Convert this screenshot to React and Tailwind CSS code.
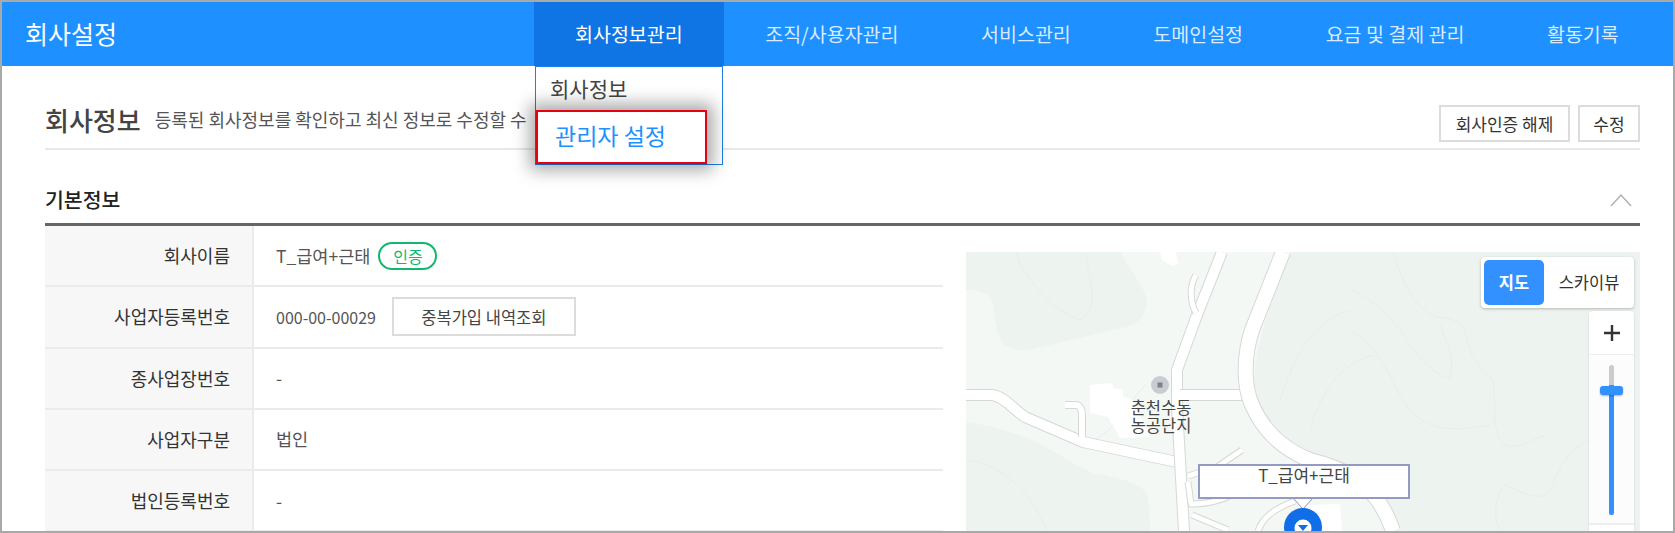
const navItems = ["회사정보관리", "조직/사용자관리", "서비스관리", "도메인설정", "요금 및 결제 관리", "활동기록"];

const rows = [
  { label: "회사이름", value: "T_급여+근태", badge: true },
  { label: "사업자등록번호", value: "000-00-00029", button: "중복가입 내역조회", small: true },
  { label: "종사업장번호", value: "-" },
  { label: "사업자구분", value: "법인" },
  { label: "법인등록번호", value: "-" },
];

function Road({ d, w }) {
  return (
    <g fill="none" strokeLinecap="butt" strokeLinejoin="round">
      <path d={d} stroke="#d5d8d6" strokeWidth={w + 2} />
      <path d={d} stroke="#ffffff" strokeWidth={w} />
    </g>
  );
}

function MapDrawing() {
  return (
    <svg viewBox="966 252 674 279" className="block w-full h-full">
      <rect x="966" y="252" width="674" height="279" fill="#f4f8f5" />
      <path d="M966 252H1120C1130 270 1147 290 1147 303C1145 318 1135 325 1127 327C1100 332 1073 340 1045 346C1030 350 1012 354 1002 342C995 330 995 315 993 303C988 292 978 290 966 290Z" fill="#edf3ee" />
      <path d="M966 422C990 425 1012 432 1033 440C1055 452 1075 465 1093 473C1115 478 1135 480 1147 493C1150 505 1150 520 1150 531H966Z" fill="#edf3ee" />
      <path d="M1290 252H1640V531H1395C1388 505 1378 490 1355 470C1325 460 1300 452 1280 435C1262 420 1255 400 1254 380C1256 345 1270 300 1290 252Z" fill="#edf3ee" />
      <g fill="none" stroke="#e8eee9" strokeWidth="1">
        <path d="M1393 252C1400 275 1410 300 1425 310C1440 325 1450 310 1465 330C1470 355 1475 365 1492 378C1498 400 1490 420 1500 440C1510 455 1530 440 1545 435" />
        <path d="M1350 290C1375 300 1395 320 1410 345C1425 365 1440 378 1450 378C1455 360 1448 345 1440 325" />
        <path d="M1350 330C1375 345 1385 365 1400 395C1415 425 1440 435 1490 425" />
        <path d="M1280 400C1300 340 1320 320 1350 310" />
        <path d="M1310 430C1320 390 1345 360 1375 355" />
        <path d="M1500 531C1490 510 1500 490 1505 485C1520 490 1540 505 1550 490C1560 470 1565 450 1590 440" />
        <path d="M1016 252C1022 275 1050 310 1080 320C1100 310 1090 280 1085 252" />
        <path d="M966 460C990 462 1010 475 1030 500C1040 515 1045 525 1047 531" />
        <path d="M1095 440C1120 425 1130 400 1145 385" />
      </g>
      <path d="M1090 385L1112 383L1113 388L1123 390L1123 397L1133 400L1150 437L1120 438L1108 417L1090 413Z" fill="#ffffff" />
      <path d="M1160 252L1176 252L1178 264L1172 266L1162 260Z" fill="#ffffff" />
      <path d="M1306 505L1340 504L1342 531H1306Z" fill="#ffffff" />
      <Road d="M966 395H992C1004 396 1014 410 1025 417L1083 442L1177 462" w={10} />
      <Road d="M1222 252L1197 315L1177 370V407L1180 460L1184 531" w={10} />
      <Road d="M1243 395H1180" w={10} />
      <Road d="M1196 275C1190 285 1189 300 1196 313" w={5} />
      <Road d="M1065 405H1076C1080 405 1082 410 1082 415V437" w={6} />
      <Road d="M1242 450L1217 467L1188 476" w={5} />
      <Road d="M1188 482L1191 504C1210 504 1225 500 1240 490" w={5} />
      <Road d="M1192 515L1228 530" w={5} />
      <Road d="M1258 531C1262 520 1270 510 1295 501" w={5} />
      <Road d="M1283 252L1252 330C1244 355 1243 385 1252 405C1262 428 1280 448 1310 460C1345 468 1378 485 1393 531" w={14} />
      <circle cx="1160" cy="385" r="9" fill="#c9ccd1" />
      <rect x="1157.5" y="382.5" width="5" height="5" fill="#7d8288" />
      <path d="M1293 498L1303 509L1313 498" fill="#ffffff" stroke="#8a93bd" strokeWidth="1" />
      <circle cx="1303" cy="527" r="19" fill="#0f6ee8" />
      <circle cx="1303" cy="528" r="8.5" fill="#ffffff" />
      <path d="M1298 525H1308L1303 531Z" fill="#0f6ee8" />
    </svg>
  );
}

export default function App() {
  return (
    <div
      className="relative h-[533px] overflow-hidden border-2 border-[#a9a9a9] bg-white text-[#333]"
      style={{ fontFamily: '"Noto Sans CJK KR", "Noto Sans", sans-serif' }}
    >
      <header className="flex h-[64px] items-center justify-between bg-[#1e90ff] pl-[23px] pr-[13px]">
        <h1 className="text-[25px] font-normal text-white">회사설정</h1>
        <nav className="flex h-full">
          {navItems.map((item, i) => (
            <div
              key={item}
              className={
                i === 0
                  ? "flex h-full items-center whitespace-nowrap bg-[#0f75e5] px-[41.3px] pb-[1px] text-[19.5px] text-white"
                  : "flex h-full items-center whitespace-nowrap px-[41.3px] pb-[1px] text-[19.5px] text-[#d8ebff]"
              }
            >
              {item}
            </div>
          ))}
        </nav>
      </header>

      {/* dropdown */}
      <div className="absolute left-[533px] top-[64px] z-20 h-[99px] w-[188px] border border-[#1e7fe8] bg-white">
        <div className="pl-[14px] pt-[6px] text-[21px] leading-[30px] text-[#444]">회사정보</div>
        <div className="absolute left-0 top-[43px] flex h-[54px] w-[171px] items-center border-2 border-[#e60012] bg-white pb-[4px] pl-[17px] text-[23px] text-[#1e90ff] shadow-[0_0_16px_6px_rgba(0,0,0,0.35)]">
          관리자 설정
        </div>
      </div>

      <main className="pl-[43px] pr-[33px]">
        <div className="flex h-[84px] items-center justify-between border-b-2 border-[#e8e8e8] pt-[24px]">
          <div className="flex items-center gap-[14px]">
            <h2 className="text-[26px] font-medium text-[#444]">회사정보</h2>
            <p className="whitespace-nowrap text-[18px] text-[#555]">등록된 회사정보를 확인하고 최신 정보로 수정할 수</p>
          </div>
          <div className="mb-[6px] flex gap-[8px] self-end">
            <button className="h-[37px] w-[131px] border-2 border-[#dcdcdc] text-[17px] text-[#333]">회사인증 해제</button>
            <button className="h-[37px] w-[62px] border-2 border-[#dcdcdc] text-[17px] text-[#333]">수정</button>
          </div>
        </div>

        <div className="flex h-[76px] items-center justify-between border-b-[3px] border-[#666] pt-[26px]">
          <h3 className="text-[20.5px] font-medium text-[#222]">기본정보</h3>
          <svg width="22" height="14" viewBox="0 0 22 14" className="mr-[8px]" fill="none" stroke="#b0b0b0" strokeWidth="1.5">
            <path d="M1 13L11 2L21 13" />
          </svg>
        </div>

        <div className="flex">
          <div className="w-[898px] shrink-0">
            {rows.map((row) => (
              <div key={row.label} className="flex h-[61.3px] border-b-2 border-[#ebebeb]">
                <div className="flex w-[209px] shrink-0 items-center justify-end border-r-2 border-[#ebebeb] bg-[#f7f7f7] pr-[22px] text-[18px] text-[#333]">
                  {row.label}
                </div>
                <div className="flex items-center pl-[22px] text-[#555]">
                  <span className={row.small ? "text-[16px]" : "text-[17.5px]"}>{row.value}</span>
                  {row.badge && (
                    <span className="ml-[8px] flex h-[28px] w-[59px] items-center justify-center rounded-full border-2 border-[#10b86c] text-[16px] text-[#10b86c]">
                      인증
                    </span>
                  )}
                  {row.button && (
                    <button className="ml-[16px] h-[39px] w-[184px] border-2 border-[#dcdcdc] text-[16.5px] text-[#444]">
                      {row.button}
                    </button>
                  )}
                </div>
              </div>
            ))}
          </div>

          <div className="relative ml-[23px] mt-[26px] h-[279px] flex-1">
            <MapDrawing />

            {/* marker label */}
            <div className="absolute left-[232px] top-[212px] h-[35px] w-[212px] border-2 border-[#939bc3] bg-white text-center text-[17px] leading-[18px] text-[#444]">
              T_급여+근태
            </div>

            {/* map type control */}
            <div className="absolute right-[6px] top-[5px] flex h-[51px] w-[153px] items-center rounded-[4px] bg-white pl-[3px] shadow-[0_1px_3px_rgba(0,0,0,0.25)]">
              <div className="flex h-[45px] w-[60px] items-center justify-center rounded-[5px] bg-[#3391ff] text-[16.5px] font-bold text-white">지도</div>
              <div className="flex-1 text-center text-[16.5px] text-[#333]">스카이뷰</div>
            </div>

            {/* zoom control */}
            <div className="absolute right-[6px] top-[59px] h-[220px] w-[45px] rounded-t-[4px] bg-white shadow-[0_1px_2px_rgba(0,0,0,0.15)]">
              <div className="flex h-[44px] items-center justify-center border-b border-[#eeeeee]">
                <svg width="18" height="18" viewBox="0 0 18 18" stroke="#333" strokeWidth="2.4">
                  <path d="M9 1V17M1 9H17" />
                </svg>
              </div>
              <div className="relative h-[170px] border-b-2 border-[#eeeeee] bg-[#fbfcfb]">
                <div className="absolute left-[20px] top-[10px] h-[150px] w-[5px] rounded-full bg-[#cccccc]" />
                <div className="absolute left-[20px] top-[30px] h-[130px] w-[5px] rounded-b-full bg-[#3391ff]" />
                <div className="absolute left-[11px] top-[31px] h-[9px] w-[23px] rounded-[3px] bg-[#3391ff] shadow-[0_1px_2px_rgba(0,0,0,0.3)]" />
              </div>
            </div>

            {/* centre pin caption */}
            <div className="absolute left-[162px] top-[146px] w-[66px] text-center text-[16.5px] leading-[18px] text-[#444]">
              춘천수동
              <br />
              농공단지
            </div>
          </div>
        </div>
      </main>
    </div>
  );
}
